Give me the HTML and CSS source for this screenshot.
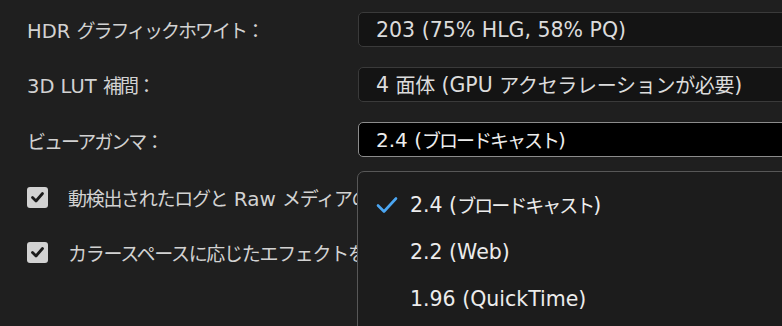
FILE: index.html
```html
<!DOCTYPE html>
<html lang="ja">
<head>
<meta charset="utf-8">
<title>ビューアガンマ</title>
<link rel="stylesheet" href="styles.css">
</head>
<body>
<div class="panel">
  <div class="form">
    <div class="label"><span class="en">HDR </span>グラフィックホワイト：</div>
    <div class="field"><span class="en">203 (75% HLG, 58% PQ)</span></div>
    <div class="label"><span class="en">3D LUT </span>補間：</div>
    <div class="field"><span class="en">4 </span>面体<span class="en"> (GPU </span>アクセラレーションが必要<span class="en">)</span></div>
    <div class="label">ビューアガンマ：</div>
    <div class="field field-open"><span class="en">2.4 (</span>ブロードキャスト<span class="en">)</span></div>
  </div>
  <div class="checks">
    <div class="check-row">
      <span class="checkbox"><svg viewBox="0 0 21 21" width="21" height="21"><polyline points="5.5,10.5 9,14 15.5,6.5" fill="none" stroke="#1b1b1b" stroke-width="2.8" stroke-linecap="round" stroke-linejoin="round"/></svg></span>
      <span class="check-label">動検出されたログと<span class="en"> Raw </span>メディアのカラースペースを上書き</span>
    </div>
    <div class="check-row">
      <span class="checkbox"><svg viewBox="0 0 21 21" width="21" height="21"><polyline points="5.5,10.5 9,14 15.5,6.5" fill="none" stroke="#1b1b1b" stroke-width="2.8" stroke-linecap="round" stroke-linejoin="round"/></svg></span>
      <span class="check-label">カラースペースに応じたエフェクトを使用</span>
    </div>
  </div>
  <p class="peek">ライブラリのカラーマネジメント</p>
</div>
<div class="menu">
  <div class="menu-item selected"><svg class="tick" viewBox="0 0 22 18" width="22" height="18"><polyline points="2,9.5 8,15.5 20,2.5" fill="none" stroke="#4ba6f2" stroke-width="2.6" stroke-linecap="round" stroke-linejoin="round"/></svg><span class="en">2.4 (</span>ブロードキャスト<span class="en">)</span></div>
  <div class="menu-item"><span class="en">2.2 (Web)</span></div>
  <div class="menu-item"><span class="en">1.96 (QuickTime)</span></div>
</div>
</body>
</html>
```
FILE: styles.css
```css
html, body {
  margin: 0;
  padding: 0;
  overflow: hidden;
  background: #1f1f1f;
}
body {
  width: 782px;
  height: 326px;
  position: relative;
  font-family: "Noto Sans CJK JP", "DejaVu Sans", sans-serif;
  font-size: 19px;
  letter-spacing: -2px;
  color: #d2d2d2;
}
.en {
  font-family: "DejaVu Sans", "Noto Sans CJK JP", sans-serif;
  font-size: 20px;
  letter-spacing: 0;
}
.panel {
  padding: 12px 0 0 27px;
}
.form {
  display: grid;
  grid-template-columns: 331px 460px;
  grid-auto-rows: 35px;
  row-gap: 20px;
  align-items: center;
}
.label {
  white-space: pre;
  line-height: 1;
  padding-top: 2px;
}
.label .en {
  font-size: 19.5px;
}
.field {
  box-sizing: border-box;
  height: 35px;
  display: flex;
  align-items: center;
  padding-left: 17px;
  background: #141414;
  border: 1px solid #3a3a3a;
  border-radius: 5px;
  color: #dcdcdc;
  white-space: pre;
  font-size: 20px;
  letter-spacing: -0.3px;
}
.field .en {
  font-size: 20.5px;
}
.field-open {
  background: #000;
  border: 1.5px solid #8c8c8c;
  color: #ededed;
  font-size: 19px;
  letter-spacing: -2px;
}
.field-open .en {
  font-size: 20px;
}
.checks {
  margin-top: 23px;
  display: grid;
  grid-auto-rows: 35px;
  row-gap: 20px;
}
.check-row {
  display: flex;
  align-items: center;
  gap: 20px;
  white-space: nowrap;
}
.checkbox {
  width: 21px;
  height: 21px;
  flex: none;
  background: #d2d2d2;
  border-radius: 3px;
  display: block;
}
.checkbox svg { display: block; }
.check-label {
  white-space: pre;
  letter-spacing: -1.3px;
}
.check-label .en {
  letter-spacing: 0;
}
.peek {
  margin: 52px 0 0 53px;
  white-space: nowrap;
  color: #cfcfcf;
}
.menu {
  position: absolute;
  left: 357px;
  top: 171px;
  width: 480px;
  height: 200px;
  box-sizing: border-box;
  background: #1c1c1c;
  border: 1px solid #575757;
  border-radius: 7px;
  padding-top: 9px;
}
.menu-item {
  height: 47px;
  display: flex;
  align-items: center;
  padding-left: 52px;
  position: relative;
  color: #ececec;
  white-space: pre;
}
.menu-item .en {
  font-size: 20.5px;
}
.tick {
  position: absolute;
  left: 18px;
  top: 15px;
}
```
